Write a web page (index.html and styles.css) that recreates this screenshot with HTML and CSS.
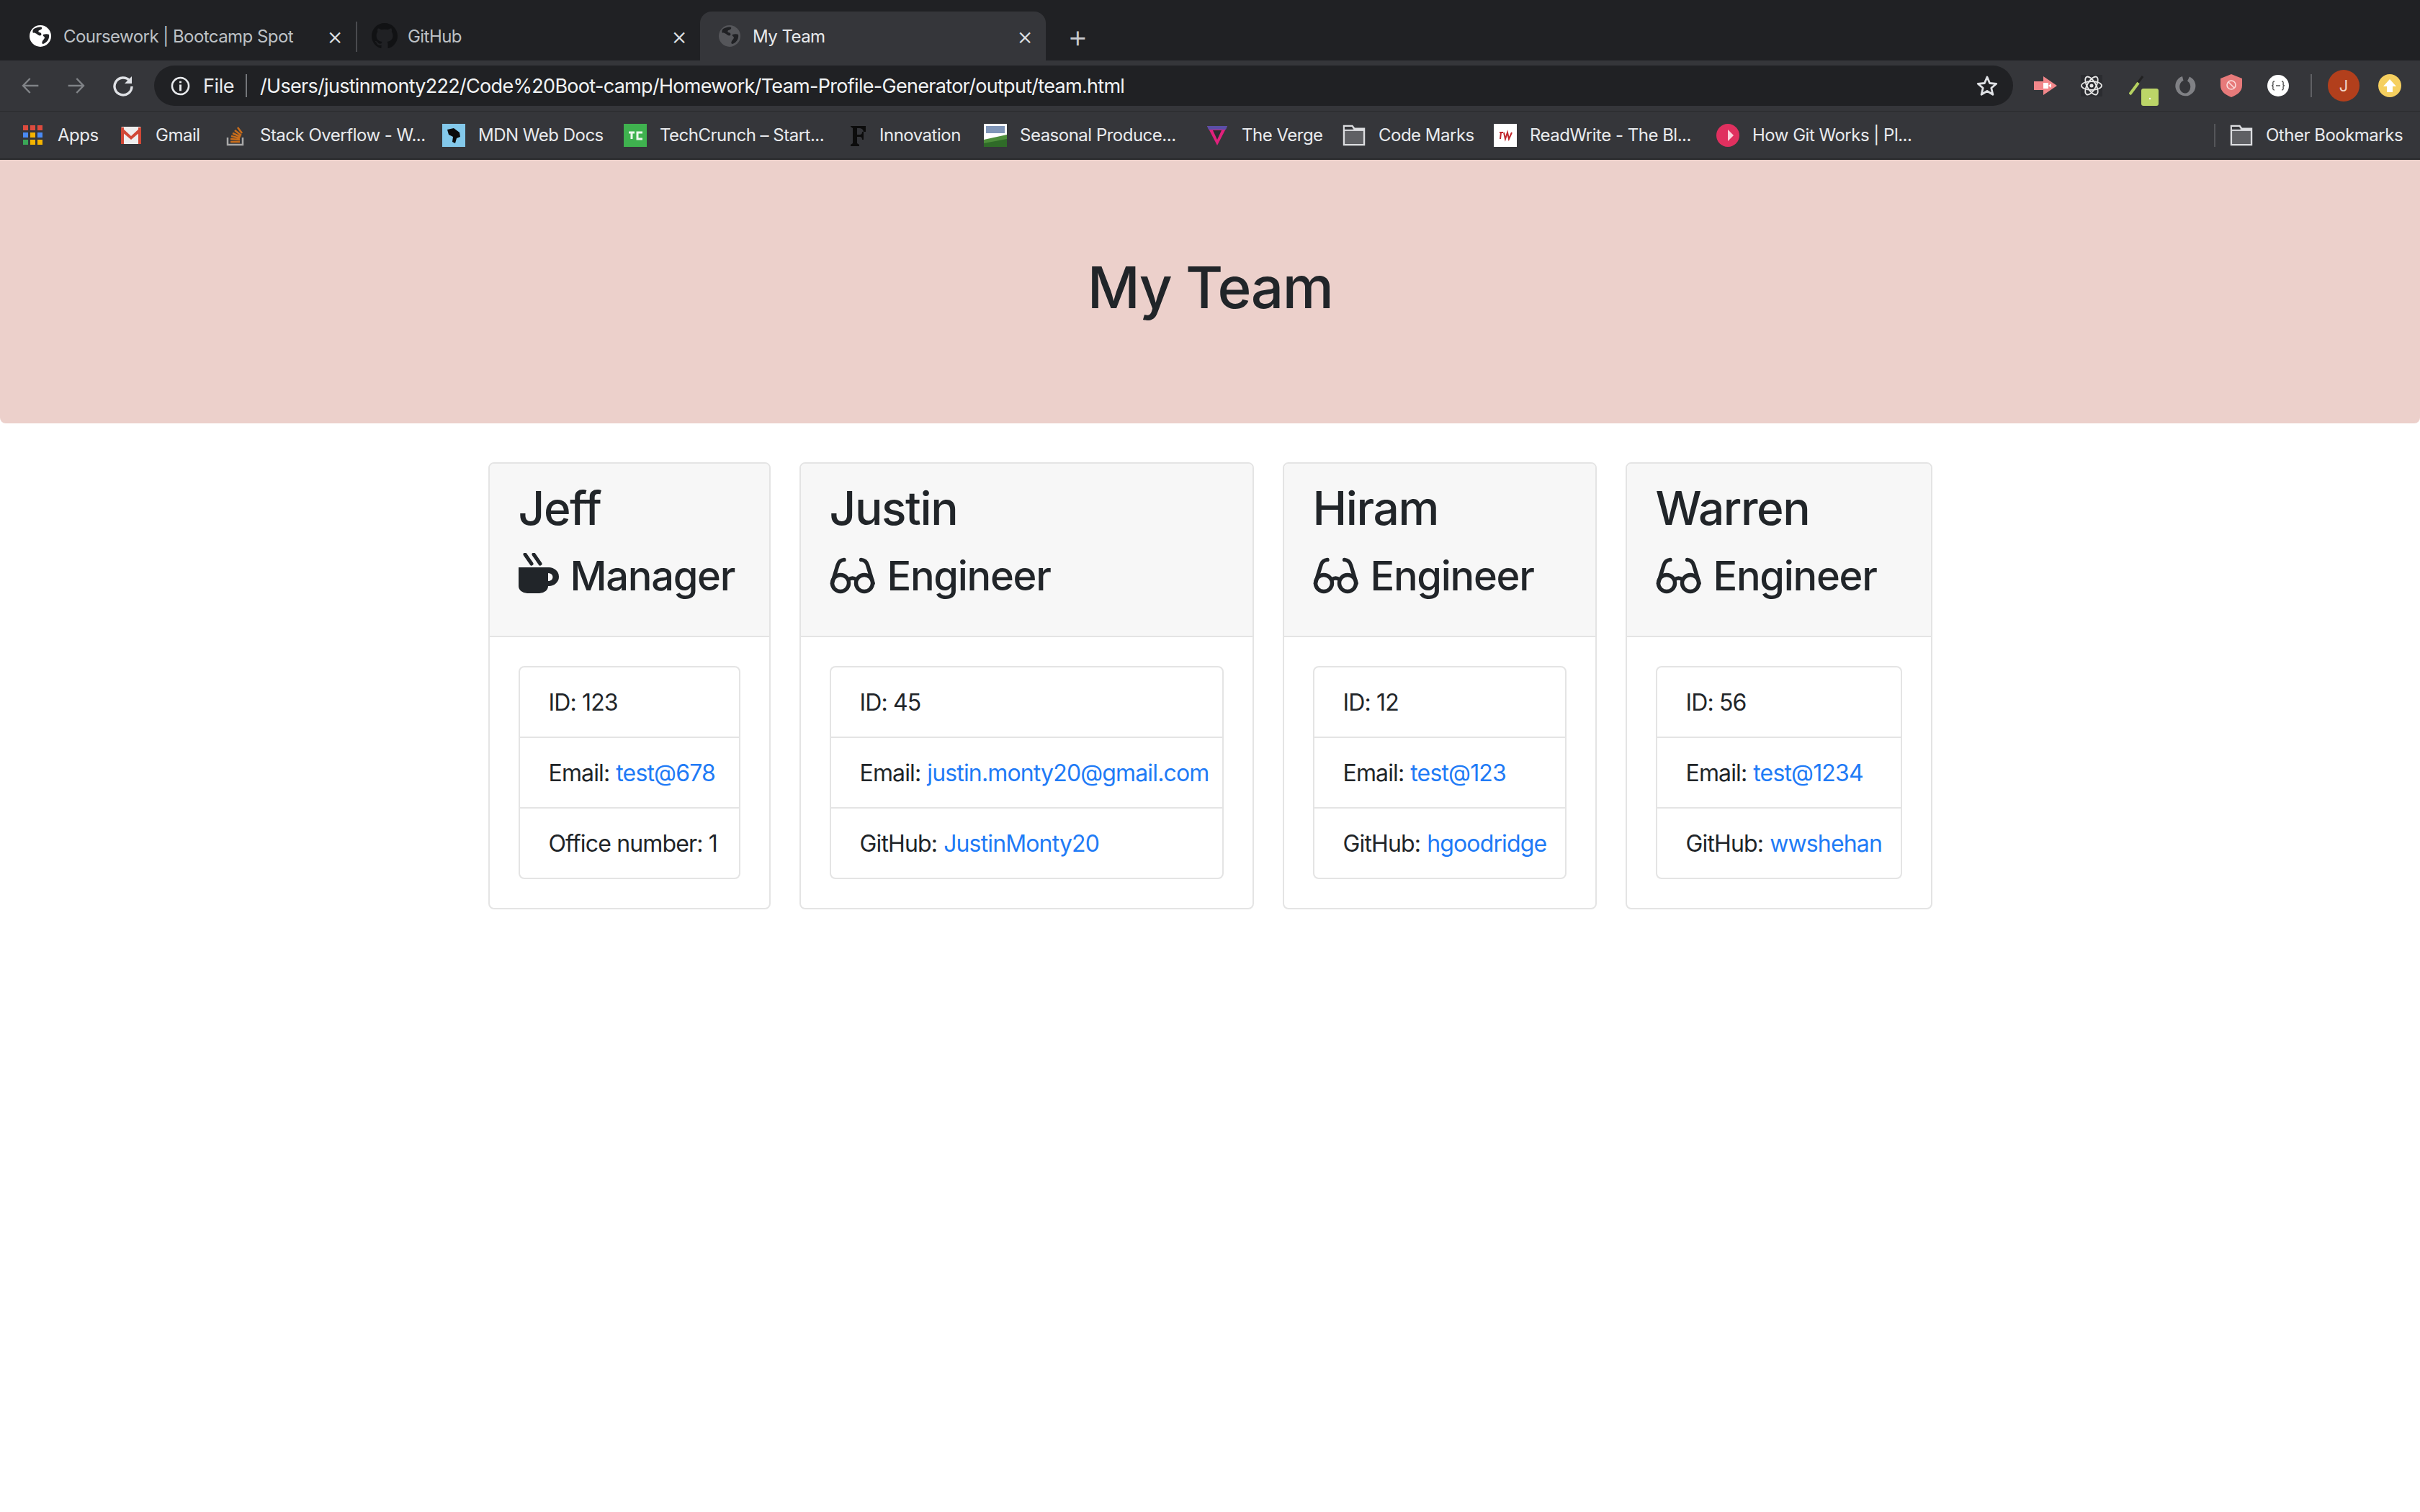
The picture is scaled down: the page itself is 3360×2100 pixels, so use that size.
FILE: index.html
```html
<!DOCTYPE html>
<html lang="en">
<head>
<meta charset="utf-8">
<title>My Team</title>
<link rel="stylesheet" href="styles.css">
</head>
<body>
<svg class="defs" width="0" height="0" aria-hidden="true">
  <symbol id="globe" viewBox="0 0 30 30">
    <circle cx="15" cy="15" r="15" fill="currentColor"/>
    <path d="M6 5c4-2 8-3 11-2 1 2-1 3-3 4-2 0-2 2-1 3 3 0 4 2 3 4-2 1-4 0-6-2-2-1-4-2-5-1-1-2-1-4 1-6zM19 13c3-1 6-1 8 0 1 5-2 11-8 13-2 0-2-2-1-4 1-2 3-3 3-5-1-2-3-2-2-4z" fill="#202124"/>
  </symbol>
  <symbol id="folder" viewBox="0 0 33 33">
    <path d="M2 3h12l3 4h14v23H2z" fill="#5f6064" stroke="#dcdde0" stroke-width="2.4"/>
    <path d="M2 9h29" stroke="#dcdde0" stroke-width="2.4"/>
    <path d="M3 4h10l2 4H3z" fill="#35363a"/>
  </symbol>
  <symbol id="glasses" viewBox="0 0 64 52">
    <g fill="none" stroke="currentColor" stroke-width="5.4" stroke-linecap="round">
      <circle cx="15" cy="36" r="11.5"/>
      <circle cx="48" cy="36" r="11.5"/>
      <path d="M3.4 36 11 11Q13 4 20 3.4"/>
      <path d="M60.2 36 52.6 11Q50.6 4 43.6 3.4"/>
      <path d="M26 31Q31.500 27 37 31"/>
    </g>
  </symbol>
  <symbol id="mug" viewBox="0 0 56 56">
    <path d="M0 20H41V20H42A14 13 0 0 1 42 46H41A12 10 0 0 1 29 56H12A12 10 0 0 1 0 46Z" fill="currentColor"/>
    <path d="M41 28V39A6.500 5.500 0 0 0 41 28Z" fill="#f7f7f7"/>
    <path d="M9 2 18 15M21 2 30 15" stroke="currentColor" stroke-width="5" stroke-linecap="round" fill="none"/>
  </symbol>
</svg>

<header class="chrome">
  <div class="tabstrip">
    <div class="tab tab-one">
      <svg class="favicon fav-light"><use href="#globe"/></svg>
      <span class="tab-title">Coursework | Bootcamp Spot</span>
      <span class="tab-close">×</span>
    </div>
    <i class="tab-sep"></i>
    <div class="tab tab-two">
      <svg class="favicon fav-github" viewBox="0 0 16 16"><path fill="#111214" d="M8 0C3.58 0 0 3.58 0 8c0 3.540 2.290 6.530 5.470 7.590.4.070.55-.17.55-.38 0-.19-.01-.82-.01-1.490-2.010.37-2.530-.49-2.690-.94-.09-.23-.48-.94-.82-1.130-.28-.15-.68-.52-.01-.53.63-.01 1.080.58 1.230.82.72 1.210 1.870.87 2.330.66.07-.52.28-.87.51-1.070-1.780-.2-3.640-.89-3.640-3.950 0-.87.31-1.590.82-2.150-.08-.2-.36-1.020.08-2.120 0 0 .67-.21 2.200.82.64-.18 1.320-.27 2-.27.68 0 1.360.09 2 .27 1.530-1.040 2.200-.82 2.200-.82.44 1.100.16 1.920.08 2.120.51.56.82 1.270.82 2.150 0 3.070-1.870 3.750-3.650 3.950.29.25.54.73.54 1.480 0 1.070-.01 1.930-.01 2.200 0 .21.15.46.55.38A8.013 8.013 0 0 0 16 8c0-4.420-3.580-8-8-8z"/></svg>
      <span class="tab-title">GitHub</span>
      <span class="tab-close">×</span>
    </div>
    <div class="tab tab-active">
      <svg class="favicon fav-dim"><use href="#globe"/></svg>
      <span class="tab-title">My Team</span>
      <span class="tab-close">×</span>
    </div>
    <span class="new-tab">+</span>
  </div>

  <div class="toolbar">
    <svg class="nav-icon nav-back" viewBox="0 0 30 28"><path d="M28 14H3M14 2 2.500 14 14 26" fill="none" stroke="currentColor" stroke-width="3"/></svg>
    <svg class="nav-icon nav-forward" viewBox="0 0 30 28"><path d="M2 14H27M16 2 27.500 14 16 26" fill="none" stroke="currentColor" stroke-width="3"/></svg>
    <svg class="nav-icon nav-reload" viewBox="0 0 30 30"><path d="M24 8A12 12 0 1 0 27 16" fill="none" stroke="currentColor" stroke-width="3.400"/><path d="M27 2V12H17Z" fill="currentColor"/></svg>
    <div class="omnibox">
      <svg class="info" viewBox="0 0 28 28"><circle cx="14" cy="14" r="12" fill="none" stroke="currentColor" stroke-width="2.600"/><path d="M14 12V21M14 7V9.500" stroke="currentColor" stroke-width="3"/></svg>
      <span class="scheme">File</span>
      <i class="omni-sep"></i>
      <span class="url">/Users/justinmonty222/Code%20Boot-camp/Homework/Team-Profile-Generator/output/team.html</span>
      <svg class="star" viewBox="0 0 30 30"><path d="M15 3 18.600 11.500 27.800 12.300 20.800 18.300 22.900 27.300 15 22.500 7.100 27.300 9.200 18.300 2.200 12.300 11.400 11.500Z" fill="none" stroke="currentColor" stroke-width="2.800" stroke-linejoin="round"/></svg>
    </div>
    <div class="extensions">
      <svg class="ext ext-arrow" viewBox="0 0 32 26"><path d="M0 7H13V0L32 13 13 26V19H0Z" fill="#f2878a"/><path d="M13 9H20V17H13ZM20 13 24 10V16Z" fill="#fff"/></svg>
      <svg class="ext ext-react" viewBox="0 0 30 30"><rect width="30" height="30" fill="#2b2c30"/><g fill="none" stroke="#e6e6e6" stroke-width="1.800"><ellipse cx="15" cy="15" rx="14" ry="6"/><ellipse cx="15" cy="15" rx="14" ry="6" transform="rotate(60 15 15)"/><ellipse cx="15" cy="15" rx="14" ry="6" transform="rotate(120 15 15)"/></g><circle cx="15" cy="15" r="2.500" fill="#e6e6e6"/></svg>
      <svg class="ext ext-pen" viewBox="0 0 42 44"><path d="M1 27 19 3" stroke="#222" stroke-width="3"/><path d="M1 28 13 12" stroke="#b5d161" stroke-width="4"/><rect x="17" y="20" width="24" height="24" rx="3" fill="#bcd568"/><circle cx="29" cy="34" r="1.200" fill="#fff"/></svg>
      <svg class="ext ext-ring" viewBox="0 0 32 32"><path d="M12 3A14 14 0 1 0 22 3.500L19 9.500A7.500 9 0 1 1 13.500 9Z" fill="#808185"/></svg>
      <svg class="ext ext-shield" viewBox="0 0 32 32"><path d="M16 0 31 6V16C31 24 24 29 16 32 8 29 1 24 1 16V6Z" fill="#e77a7a"/><circle cx="16" cy="15" r="6" fill="none" stroke="#fbdcdc" stroke-width="1.600"/><path d="M12 11 20 19" stroke="#fbdcdc" stroke-width="1.600"/></svg>
      <svg class="ext ext-json" viewBox="0 0 30 30"><circle cx="15" cy="15" r="15" fill="#fff"/><path d="M10 9Q7 9 8 13 8 15 6 15 8 15 8 17 7 21 10 21M20 9Q23 9 22 13 22 15 24 15 22 15 22 17 23 21 20 21M12 15H18" fill="none" stroke="#555" stroke-width="1.400"/></svg>
      <i class="ext-sep"></i>
      <span class="avatar">J</span>
      <svg class="ext ext-update" viewBox="0 0 32 32"><circle cx="16" cy="16" r="16" fill="#f5cf5f"/><path d="M16 7 25 17H20V25H12V17H7Z" fill="#fff"/></svg>
    </div>
  </div>

  <nav class="bookmarks">
    <a class="bookmark"><svg class="bm-icon" viewBox="0 0 32 32"><g class="apps"><rect x="2" y="2" width="7" height="7" fill="#dd4b3e"/><rect x="12" y="2" width="7" height="7" fill="#dd4b3e"/><rect x="22" y="2" width="7" height="7" fill="#dd4b3e"/><rect x="2" y="12" width="7" height="7" fill="#4a8af4"/><rect x="12" y="12" width="7" height="7" fill="#f4b400"/><rect x="22" y="12" width="7" height="7" fill="#4a8af4"/><rect x="2" y="22" width="7" height="7" fill="#3aa757"/><rect x="12" y="22" width="7" height="7" fill="#f4b400"/><rect x="22" y="22" width="7" height="7" fill="#f4b400"/></g></svg><span>Apps</span></a>
    <a class="bookmark"><svg class="bm-icon" viewBox="0 0 32 32"><rect x="2" y="4" width="28" height="24" rx="2" fill="#eee"/><path d="M2 5H6V28H2ZM26 5H30V28H26ZM3 5 16 17 29 5V11L16 22 3 11Z" fill="#d14836"/></svg><span>Gmail</span></a>
    <a class="bookmark"><svg class="bm-icon" viewBox="0 0 32 32"><path d="M5 19V29H26V19" fill="none" stroke="#a9a9a9" stroke-width="2.500"/><path d="M9 25H22M9 21 22 22M10 17 22 20M12 13 23 18M15 9 24 16M19 5 25 13" stroke="#c96d1b" stroke-width="2.600"/></svg><span>Stack Overflow - W...</span></a>
    <a class="bookmark"><svg class="bm-icon" viewBox="0 0 32 32"><rect width="32" height="32" fill="#83c8ea"/><path d="M7 8 16 6 24 12 25 18 20 20 18 27 14 25 15 18 9 15Z" fill="#0b0b0b"/></svg><span>MDN Web Docs</span></a>
    <a class="bookmark"><svg class="bm-icon" viewBox="0 0 32 32"><rect width="32" height="32" fill="#3fb24f"/><path d="M7 12H15M11 12V21M26 12H19V21H26" fill="none" stroke="#eaf7ec" stroke-width="3"/></svg><span>TechCrunch – Start...</span></a>
    <a class="bookmark"><svg class="bm-icon bm-f" viewBox="0 0 24 32"><path d="M2 3H23V11H20Q19 6 14 6H11V15H15Q18 15 18 11H20V22H18Q18 18 15 18H11V27L14 29V31H2V29L5 27V6L2 4Z" fill="#0c0c0c"/></svg><span>Innovation</span></a>
    <a class="bookmark"><svg class="bm-icon" viewBox="0 0 32 32"><rect width="32" height="32" fill="#fff"/><rect x="3" y="3" width="26" height="10" fill="#4a6a9a" opacity=".7"/><path d="M0 22 32 15V32H0Z" fill="#4d8e3b"/><path d="M0 27 32 21V32H0Z" fill="#2f6b28"/></svg><span>Seasonal Produce...</span></a>
    <a class="bookmark"><svg class="bm-icon" viewBox="0 0 32 32"><path d="M2 3H30L16 30Z" fill="#e0217c"/><path d="M2 3H30L28 8H4Z" fill="#5a4fa8"/><path d="M10 9H22L16 22Z" fill="#2b2c30"/></svg><span>The Verge</span></a>
    <a class="bookmark"><svg class="bm-icon"><use href="#folder"/></svg><span>Code Marks</span></a>
    <a class="bookmark"><svg class="bm-icon" viewBox="0 0 32 32"><rect width="32" height="32" fill="#fff"/><path d="M8 12H13M10 12 9 21M14 12 16 21 19 12 21 21 25 12" fill="none" stroke="#c0272d" stroke-width="2"/></svg><span>ReadWrite - The Bl...</span></a>
    <a class="bookmark"><svg class="bm-icon" viewBox="0 0 32 32"><circle cx="16" cy="16" r="16" fill="#e0305f"/><path d="M13 10V22M16 8 24 16 16 24Z" fill="#fbd3dd"/></svg><span>How Git Works | Pl...</span></a>
    <div class="bm-other"><i class="bm-sep"></i><a class="bookmark"><svg class="bm-icon"><use href="#folder"/></svg><span>Other Bookmarks</span></a></div>
  </nav>
</header>

<main class="page">
  <section class="jumbotron"><h1>My Team</h1></section>
  <div class="team">
    <article class="card">
      <div class="card-header">
        <h2>Jeff</h2>
        <h3><svg class="role-icon mug"><use href="#mug"/></svg>Manager</h3>
      </div>
      <div class="card-body">
        <ul class="list">
          <li>ID: 123</li>
          <li>Email: <a href="#">test@678</a></li>
          <li>Office number: 1</li>
        </ul>
      </div>
    </article>
    <article class="card">
      <div class="card-header">
        <h2>Justin</h2>
        <h3><svg class="role-icon"><use href="#glasses"/></svg>Engineer</h3>
      </div>
      <div class="card-body">
        <ul class="list">
          <li>ID: 45</li>
          <li>Email: <a href="#">justin.monty20@gmail.com</a></li>
          <li>GitHub: <a href="#">JustinMonty20</a></li>
        </ul>
      </div>
    </article>
    <article class="card">
      <div class="card-header">
        <h2>Hiram</h2>
        <h3><svg class="role-icon"><use href="#glasses"/></svg>Engineer</h3>
      </div>
      <div class="card-body">
        <ul class="list">
          <li>ID: 12</li>
          <li>Email: <a href="#">test@123</a></li>
          <li>GitHub: <a href="#">hgoodridge</a></li>
        </ul>
      </div>
    </article>
    <article class="card">
      <div class="card-header">
        <h2>Warren</h2>
        <h3><svg class="role-icon"><use href="#glasses"/></svg>Engineer</h3>
      </div>
      <div class="card-body">
        <ul class="list">
          <li>ID: 56</li>
          <li>Email: <a href="#">test@1234</a></li>
          <li>GitHub: <a href="#">wwshehan</a></li>
        </ul>
      </div>
    </article>
  </div>
</main>
</body>
</html>
```

FILE: styles.css
```css
* { box-sizing: border-box; }
html, body { margin: 0; padding: 0; background: #fff; }
body { font-family: Inter, "Liberation Sans", sans-serif; color: #212529; overflow: hidden; }
.defs { position: absolute; }

/* browser chrome */
.chrome { background: #35363a; color: #e8eaed; height: 222px; border-bottom: 2px solid #27282b; }
.tabstrip { height: 84px; background: #202124; display: flex; align-items: flex-end; padding-left: 0; }
.tab { height: 68px; display: flex; align-items: center; font-size: 24px; letter-spacing: -.55px; color: #bdc1c6; flex: none; padding-bottom: 0; position: relative; }
.tab-one { width: 494px; padding-left: 41px; }
.tab-sep { width: 2px; height: 42px; background: #4a4b4f; align-self: flex-start; margin-top: 30px; }
.tab-two { width: 476px; padding-left: 20px; }
.tab-active { width: 480px; background: #35363a; border-radius: 16px 16px 0 0; padding-left: 26px; color: #e8eaed; }
.favicon { width: 30px; height: 30px; flex: none; margin-right: 17px; }
.fav-light { color: #fff; }
.fav-dim { color: #55565a; }
.fav-github { width: 36px; height: 36px; margin-right: 14px; }
.tab-title { flex: 1; white-space: nowrap; }
.tab-close { width: 20px; margin-right: 20px; text-align: center; font-size: 34px; line-height: 1; font-weight: 300; color: #dfe1e5; }
.new-tab { font-size: 44px; line-height: 1; font-weight: 300; color: #c8cacf; margin: 0 0 12px 30px; }

.toolbar { height: 71px; display: flex; align-items: center; border-bottom: 1px solid #2a2b2e; padding-left: 30px; }
.nav-icon { flex: none; width: 25px; height: 26px; color: #808387; margin-right: 38px; }
.nav-reload { width: 30px; height: 30px; color: #dfe1e5; margin-right: 28px; }
.omnibox { width: 2581px; height: 56px; background: #202124; border-radius: 28px; display: flex; align-items: center; padding-left: 23px; flex: none; }
.info { width: 27px; height: 27px; color: #e8eaed; flex: none; margin-right: 18px; }
.scheme { font-size: 27px; letter-spacing: -.4px; color: #e8eaed; width: 59px; flex: none; }
.omni-sep { width: 2px; height: 32px; background: #74767a; flex: none; margin-right: 18px; }
.url { font-size: 27px; letter-spacing: -.7px; color: #f1f3f4; white-space: nowrap; flex: 1; }
.star { width: 30px; height: 30px; color: #dfe1e5; flex: none; margin-right: 21px; }
.extensions { display: flex; align-items: center; flex: 1; position: relative; height: 56px; padding-left: 29px; }
.ext { flex: none; display: block; }
.ext-arrow { width: 32px; height: 26px; margin-right: 33px; }
.ext-react { width: 30px; height: 30px; margin-right: 37px; }
.ext-pen { width: 42px; height: 44px; margin-right: 20px; margin-top: 12px; }
.ext-ring { width: 32px; height: 32px; margin-right: 32px; }
.ext-shield { width: 32px; height: 32px; margin-right: 34px; }
.ext-json { width: 30px; height: 30px; margin-right: 30px; }
.ext-sep { width: 2px; height: 32px; background: #5f6064; margin-right: 22px; flex: none; }
.avatar { width: 44px; height: 44px; border-radius: 50%; background: #b23f1c; color: #f3d5c8; font-size: 22px; text-align: center; line-height: 44px; margin-right: 26px; flex: none; }
.ext-update { width: 32px; height: 32px; }

.bookmarks { height: 65px; display: grid; grid-template-columns: 136px 145px 303px 252px 313px 187px 308px 190px 210px 309px 691px 1fr; align-items: center; padding-left: 30px; }
.bookmark { display: flex; align-items: center; gap: 18px; font-size: 24px; letter-spacing: -.5px; color: #e8eaed; white-space: nowrap; }
.bm-icon { width: 32px; height: 32px; flex: none; }
.bm-f { width: 24px; }
.bm-other { display: flex; align-items: center; gap: 20px; }
.bm-sep { width: 2px; height: 32px; background: #55565a; }

/* page */
.jumbotron { height: 366px; background: #ecd0cb; border-radius: 0 0 8px 8px; display: flex; justify-content: center; align-items: center; }
h1 { margin: 0 0 12px; font-size: 80px; font-weight: 500; line-height: 1.2; color: #212529; letter-spacing: -1.5px; }
.team { display: grid; grid-template-columns: 392px 631px 436px 426px; gap: 40px; justify-content: center; margin-top: 54px; }
.card { border: 2px solid #e4e4e4; border-radius: 8px; overflow: hidden; background: #fff; }
.card-header { height: 241px; background: #f7f7f7; border-bottom: 2px solid #e4e4e4; padding: 24px 40px 0; }
h2 { margin: 0 0 22px; font-size: 64px; font-weight: 500; line-height: 1.2; letter-spacing: -1.4px; }
h3 { margin: 0; font-size: 56px; font-weight: 500; line-height: 1.2; letter-spacing: -1.3px; display: flex; align-items: center; white-space: nowrap; }
.role-icon { width: 64px; height: 52px; margin-right: 16px; flex: none; }
.mug { width: 56px; height: 56px; margin-right: 16px; margin-top: -8px; }
.card-body { padding: 40px; }
.list { list-style: none; margin: 0; padding: 0; border: 2px solid #e4e4e4; border-radius: 8px; }
.list li { height: 98px; display: flex; align-items: center; gap: .28em; padding: 0 40px; font-size: 32px; letter-spacing: -.85px; white-space: nowrap; border-bottom: 2px solid #e4e4e4; }
.list li:last-child { height: 96px; border-bottom: 0; }
.list a { color: #1f7bf6; text-decoration: none; }
```
